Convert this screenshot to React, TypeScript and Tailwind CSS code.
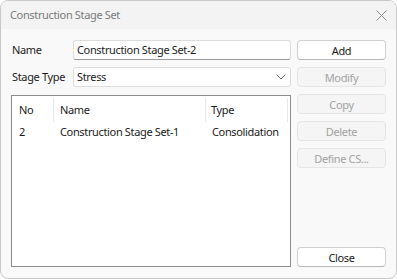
import React from "react";

const font = { fontFamily: '"Noto Sans", "Open Sans", sans-serif' };

function Btn({ label, disabled }: { label: string; disabled?: boolean }) {
  return (
    <button
      type="button"
      disabled={disabled}
      className={`h-[20px] w-[89px] rounded-[4px] border text-[11px] leading-none tracking-[-0.35px] ${
        disabled
          ? "border-[#e5e5e5] bg-[#f5f5f5] text-[#a2a2a2]"
          : "border-[#d0d0d0] border-b-[#b8b8b8] bg-white text-[#1b1b1b]"
      }`}
    >
      {label}
    </button>
  );
}

export default function App() {
  return (
    <div
      style={font}
      className="flex h-[279px] w-[397px] flex-col overflow-hidden whitespace-nowrap rounded-[8px] border border-[#c8c8c8] bg-[#f9f9f9] text-[11px] tracking-[-0.35px] text-[#1b1b1b]"
    >
      {/* title bar */}
      <div className="flex h-[28px] shrink-0 items-center justify-between bg-[#f3f3f3] pl-[9px] pr-[9px]">
        <span className="text-[11px] text-[#7a7a7a]">Construction Stage Set</span>
        <svg width="11" height="11" viewBox="0 0 11 11" stroke="#8a8a8a" strokeWidth="1" fill="none">
          <path d="M0.5 0.5l10 10M10.5 0.5l-10 10" />
        </svg>
      </div>

      <div className="flex flex-1 gap-[6px] pb-[11px] pl-[10px] pr-[10px] pt-[11px]">
        {/* left column */}
        <div className="flex w-[280px] flex-col">
          <div className="flex h-[20px] items-center">
            <span className="w-[62px] pl-[1px]">Name</span>
            <div className="flex h-[20px] flex-1 items-center rounded-[3px] border border-[#dcdcdc] border-b-[#9a9a9a] bg-white px-[3px]">
              Construction Stage Set-2
            </div>
          </div>
          <div className="mt-[7px] flex h-[20px] items-center">
            <span className="w-[62px] pl-[1px]">Stage Type</span>
            <div className="flex h-[20px] flex-1 items-center justify-between rounded-[3px] border border-[#dcdcdc] bg-white pl-[3px] pr-[4px]">
              <span>Stress</span>
              <svg width="10" height="6" viewBox="0 0 10 6" fill="none" stroke="#6a6a6a" strokeWidth="1">
                <path d="M0.5 0.5l4.5 4.5 4.5-4.5" />
              </svg>
            </div>
          </div>

          <div className="mt-[8px] flex-1 border border-[#8c8c8c] bg-white">
            <div className="flex h-[28px] items-center">
              <div className="flex h-[24px] w-[42px] items-center border-r border-[#e8e8e8] pl-[7px]">No</div>
              <div className="flex h-[24px] w-[152px] items-center border-r border-[#e8e8e8] pl-[6px]">Name</div>
              <div className="flex h-[24px] w-[82px] items-center border-r border-[#e8e8e8] pl-[5px]">Type</div>
            </div>
            <div className="flex h-[16px] items-center">
              <div className="w-[42px] pl-[7px]">2</div>
              <div className="w-[152px] pl-[6px]">Construction Stage Set-1</div>
              <div className="w-[82px] pl-[6px]">Consolidation</div>
            </div>
          </div>
        </div>

        {/* buttons */}
        <div className="flex flex-col gap-[7px]">
          <Btn label="Add" />
          <Btn label="Modify" disabled />
          <Btn label="Copy" disabled />
          <Btn label="Delete" disabled />
          <Btn label="Define CS..." disabled />
          <div className="flex-1" />
          <Btn label="Close" />
        </div>
      </div>
    </div>
  );
}
